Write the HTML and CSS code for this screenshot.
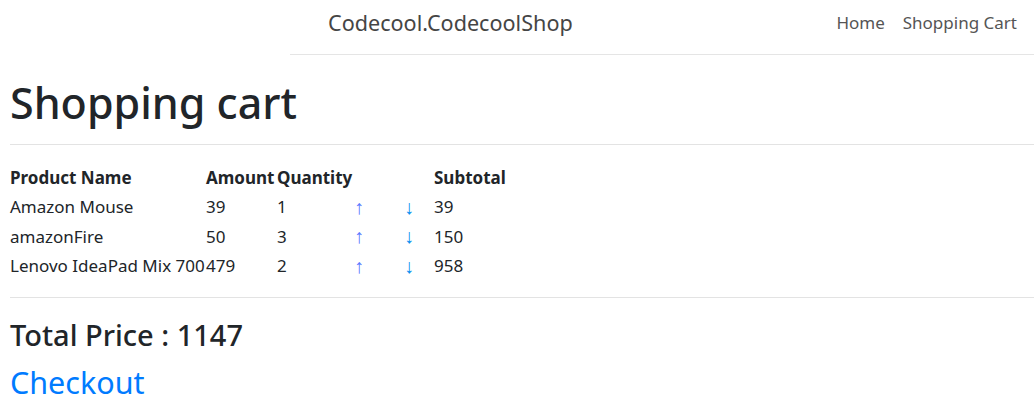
FILE: index.html
```html
<!DOCTYPE html>
<html lang="en">
<head>
<meta charset="utf-8">
<title>Shopping cart - Codecool.CodecoolShop</title>
<link rel="stylesheet" href="styles.css">
</head>
<body>
<header class="navbar">
  <a class="brand" href="#">Codecool.CodecoolShop</a>
  <nav class="nav">
    <a class="nav-link" href="#">Home</a>
    <a class="nav-link" href="#">Shopping Cart</a>
  </nav>
</header>
<main class="container">
  <h1 class="title">Shopping cart</h1>
  <hr class="rule">
  <table class="cart">
    <thead>
      <tr>
        <th class="c-name">Product Name</th>
        <th class="c-amount">Amount</th>
        <th class="c-qty">Quantity</th>
        <th class="c-up"></th>
        <th class="c-down"></th>
        <th class="c-sub">Subtotal</th>
      </tr>
    </thead>
    <tbody>
      <tr>
        <td>Amazon Mouse</td><td>39</td><td>1</td>
        <td class="c-up"><a class="arrow up" href="#">↑</a></td>
        <td class="c-down"><a class="arrow down" href="#">↓</a></td>
        <td>39</td>
      </tr>
      <tr>
        <td>amazonFire</td><td>50</td><td>3</td>
        <td class="c-up"><a class="arrow up" href="#">↑</a></td>
        <td class="c-down"><a class="arrow down" href="#">↓</a></td>
        <td>150</td>
      </tr>
      <tr>
        <td>Lenovo IdeaPad Mix 700</td><td>479</td><td>2</td>
        <td class="c-up"><a class="arrow up" href="#">↑</a></td>
        <td class="c-down"><a class="arrow down" href="#">↓</a></td>
        <td>958</td>
      </tr>
    </tbody>
  </table>
  <hr class="rule rule-bottom">
  <h3 class="total">Total Price : 1147</h3>
  <a class="checkout" href="#">Checkout</a>
</main>
</body>
</html>
```
FILE: styles.css
```css
html, body {
  margin: 0;
  padding: 0;
  background: #fff;
}
body {
  font-family: "Noto Sans", "Open Sans", sans-serif;
  color: #212529;
  font-size: 16px;
}
a { text-decoration: none; }

.navbar {
  margin-left: 290px;
  height: 54px;
  border-bottom: 1px solid #e5e5e5;
  display: flex;
  align-items: center;
  justify-content: space-between;
  padding: 0 17px 0 38px;
}
.brand {
  font-size: 21.6px;
  color: #454545;
  padding-bottom: 10px;
}
.nav {
  display: flex;
  gap: 18px;
  padding-bottom: 10px;
}
.nav-link {
  font-size: 17px;
  color: #555;
}

.container {
  padding: 0 0 0 10px;
}
.title {
  font-size: 43px;
  font-weight: 500;
  margin: 22px 0 0;
  line-height: 1.2;
}
.rule {
  border: 0;
  border-top: 1px solid #e3e3e3;
  margin: 15px 0 0;
}
.cart {
  border-collapse: collapse;
  margin-top: 18px;
  font-size: 17px;
}
.cart th, .cart td {
  padding: 0;
  text-align: left;
  height: 29.5px;
  line-height: 1;
  vertical-align: middle;
}
.cart th { font-weight: 700; }
.c-name { width: 196px; }
.c-amount { width: 71px; }
.c-qty { width: 77px; }
.c-up { width: 51px; }
.c-down { width: 29px; }
.arrow {
  font-size: 20px;
  line-height: 1;
}
.c-up .arrow { margin-left: 0; }
.c-down .arrow { margin-left: -1px; }
.arrow.up { color: #5a78ff; }
.arrow.down { color: #0a90f0; }

.rule-bottom { margin-top: 16px; }
.total {
  font-size: 29px;
  font-weight: 500;
  margin: 20px 0 0;
  line-height: 1.2;
}
.checkout {
  display: inline-block;
  font-size: 30.5px;
  color: #007bff;
  margin-top: 12px;
  line-height: 1.2;
}
```
